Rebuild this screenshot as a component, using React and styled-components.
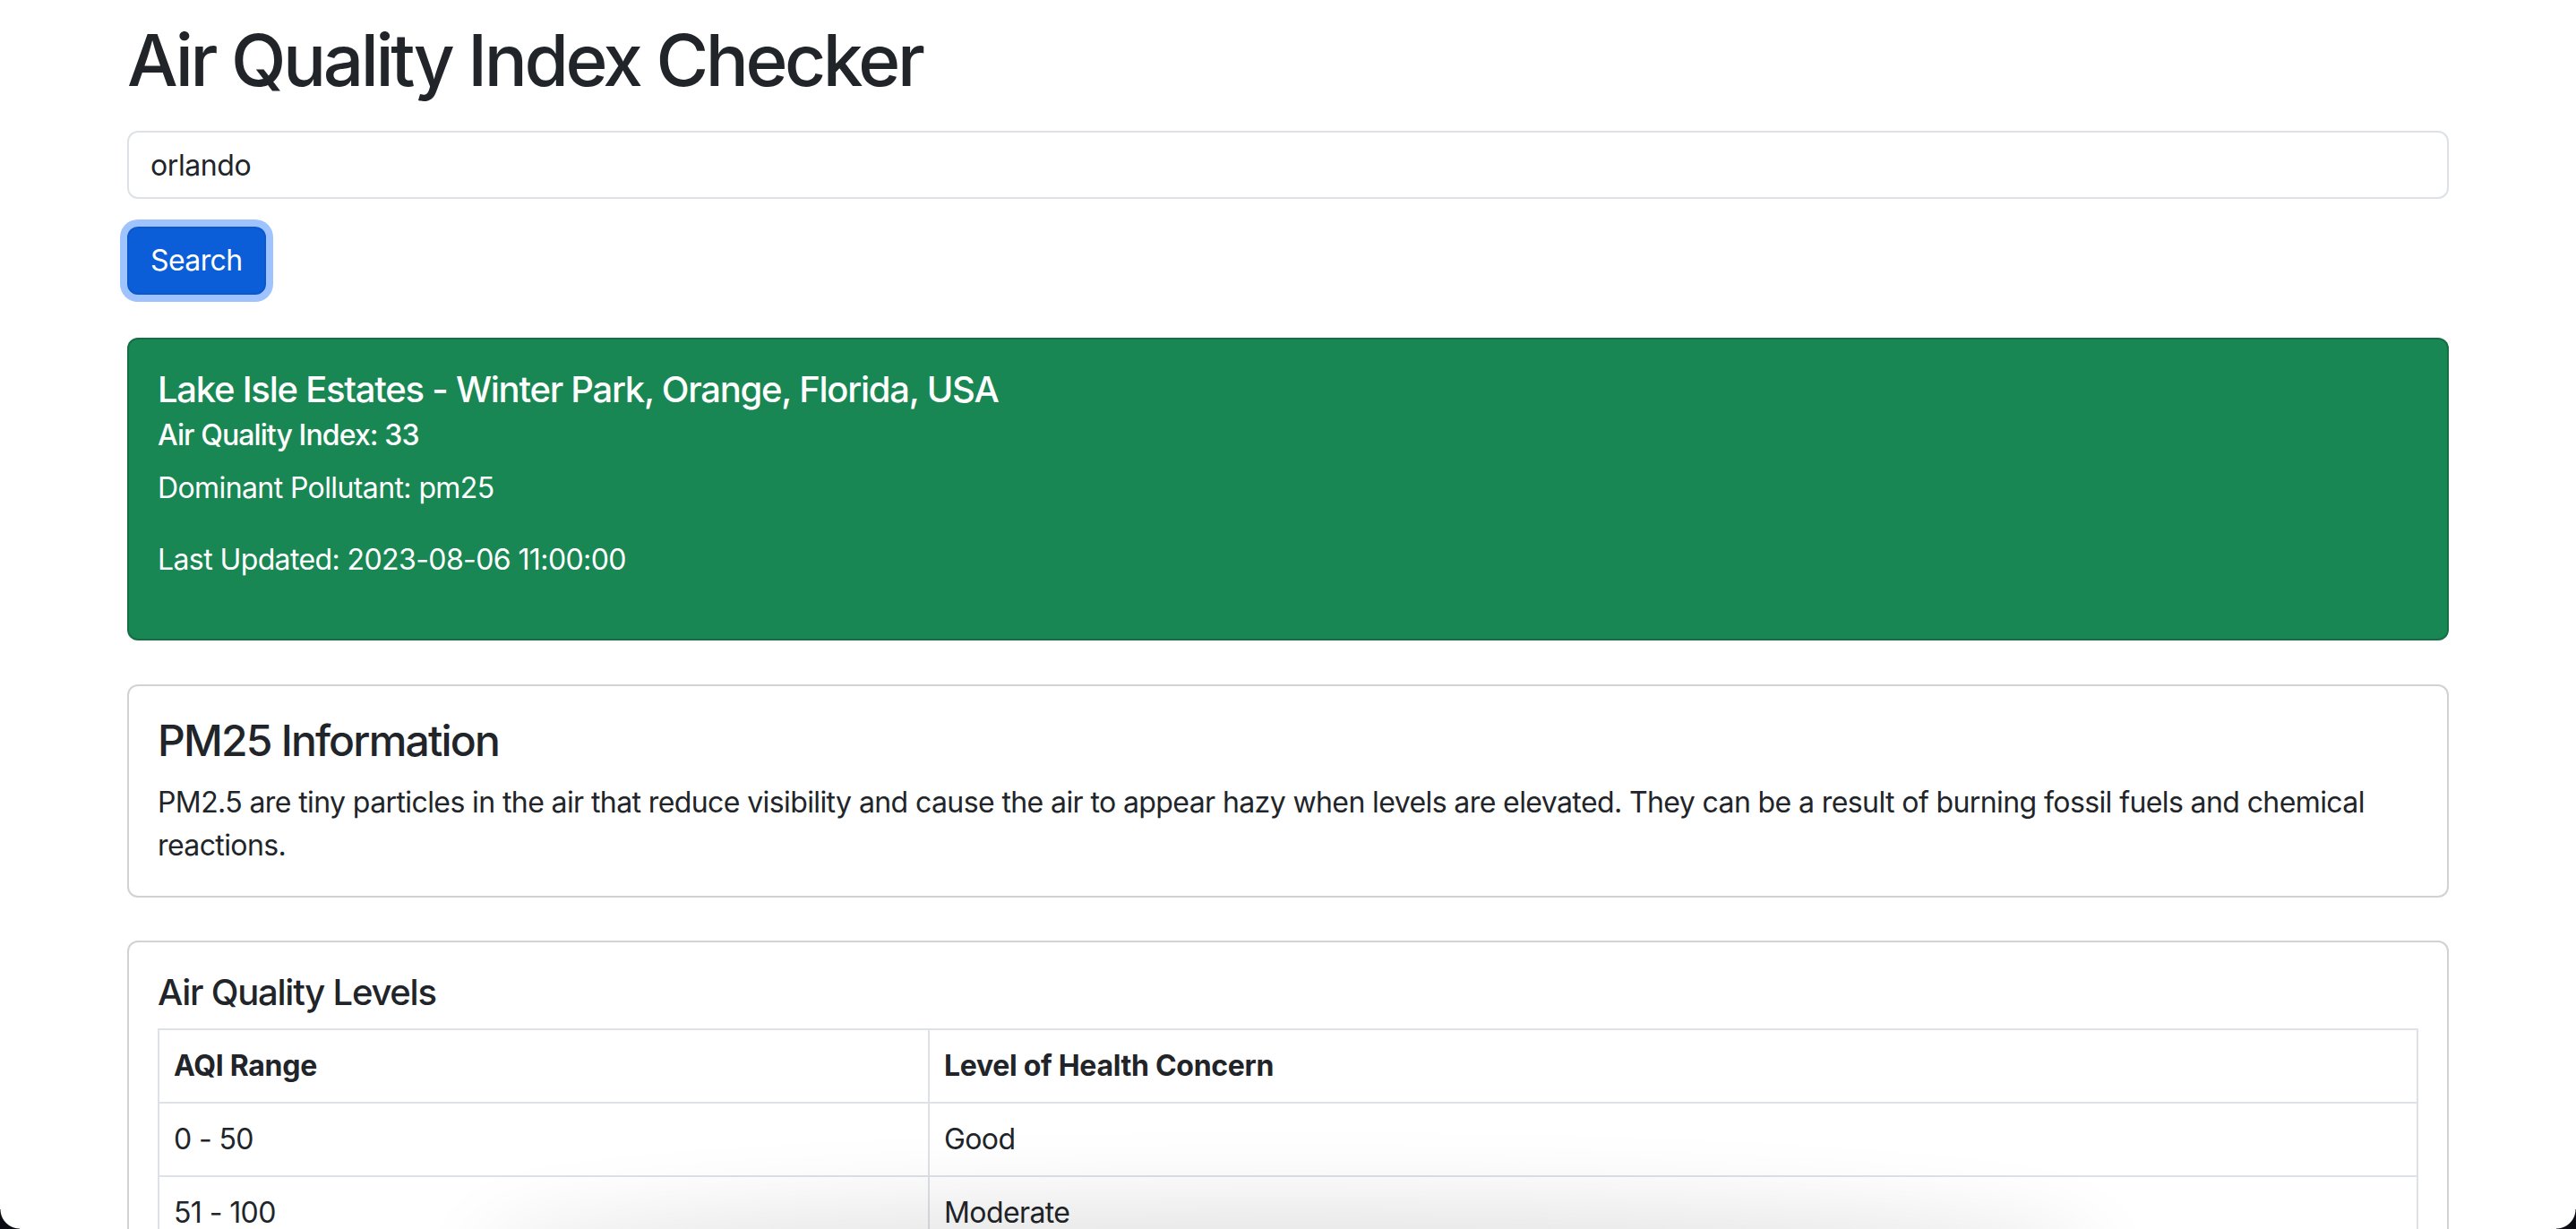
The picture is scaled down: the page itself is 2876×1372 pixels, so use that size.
import React from 'react';
import styled, { createGlobalStyle } from 'styled-components';

const GlobalStyle = createGlobalStyle`
  *, *::before, *::after {
    box-sizing: border-box;
  }
  body {
    margin: 0;
    background: #ffffff;
    color: #212529;
    font-family: Inter, "Noto Sans", "Liberation Sans", sans-serif;
    font-size: 32px;
    line-height: 1.5;
    letter-spacing: -0.6px;
  }
`;

const Container = styled.div`
  max-width: 2640px;
  margin: 0 auto;
  padding: 19px 24px 0;
`;

const Title = styled.h1`
  margin: 0 0 31px;
  font-size: 80px;
  font-weight: 500;
  line-height: 1.2;
  letter-spacing: -3.4px;
`;

const SearchInput = styled.input`
  display: block;
  width: 100%;
  height: 76px;
  margin: 0 0 31px;
  padding: 12px 24px;
  font-family: inherit;
  font-size: 32px;
  letter-spacing: -0.4px;
  color: #212529;
  background: #ffffff;
  border: 2px solid #dee2e6;
  border-radius: 12px;
  outline: none;
`;

const SearchButton = styled.button`
  display: inline-block;
  height: 76px;
  padding: 12px 24px;
  font-family: inherit;
  font-size: 32px;
  line-height: 1.5;
  letter-spacing: -0.6px;
  color: #ffffff;
  background: #0b5ed7;
  border: 2px solid #0a58ca;
  border-radius: 12px;
  box-shadow: 0 0 0 8px #9ec3fe;
  cursor: pointer;
`;

const Card = styled.div`
  margin-top: ${(p) => p.$gap}px;
  padding: 32px;
  border: 2px solid rgba(0, 0, 0, 0.175);
  border-radius: 12px;
  background: ${(p) => (p.$success ? '#198754' : '#ffffff')};
  color: ${(p) => (p.$success ? '#ffffff' : '#212529')};
`;

const CardTitle = styled.h5`
  margin: 0 0 16px;
  font-size: ${(p) => p.$size || 40}px;
  font-weight: 500;
  line-height: 1.2;
  letter-spacing: ${(p) => p.$track || -1.25}px;
`;

const CardSubtitle = styled.h6`
  margin: -8px 0 16px;
  font-size: 32px;
  font-weight: 500;
  line-height: 1.2;
  letter-spacing: -0.9px;
`;

const CardText = styled.p`
  margin: 0 0 32px;
  font-size: 32px;
  line-height: 1.5;
  &:last-child {
    margin-bottom: ${(p) => (p.$keep ? 32 : 0)}px;
  }
`;

const Table = styled.table`
  width: 100%;
  border-collapse: collapse;
  border: 2px solid #dee2e6;
`;

const HeadCell = styled.th`
  width: ${(p) => p.$width || 'auto'};
  padding: 16px;
  border: 2px solid #dee2e6;
  text-align: left;
  font-weight: 700;
  line-height: 1.5;
  letter-spacing: -0.3px;
`;

const Cell = styled.td`
  padding: 16px;
  border: 2px solid #dee2e6;
  line-height: 1.5;
`;

const BottomShade = styled.div`
  position: fixed;
  left: 560px;
  right: 560px;
  bottom: -70px;
  height: 70px;
  border-radius: 50%;
  box-shadow: 0 0 90px 30px rgba(0, 0, 0, 0.11);
  pointer-events: none;
`;

const Corner = styled.div`
  position: fixed;
  bottom: 0;
  ${(p) => (p.$right ? 'right: 0;' : 'left: 0;')}
  width: 22px;
  height: 22px;
  pointer-events: none;
  background: radial-gradient(
    circle at ${(p) => (p.$right ? '0 0' : '100% 0')},
    transparent 21px,
    #0c0c14 22px
  );
`;

const levels = [
  ['0 - 50', 'Good'],
  ['51 - 100', 'Moderate'],
  ['101 - 150', 'Unhealthy for Sensitive Groups'],
  ['151 - 200', 'Unhealthy'],
  ['201 - 300', 'Very Unhealthy'],
  ['301 +', 'Hazardous'],
];

export default function App() {
  return (
    <>
      <GlobalStyle />
      <Container>
        <Title>Air Quality Index Checker</Title>
        <SearchInput type="text" defaultValue="orlando" />
        <SearchButton type="button">Search</SearchButton>

        <Card $success $gap={48}>
          <CardTitle>Lake Isle Estates - Winter Park, Orange, Florida, USA</CardTitle>
          <CardSubtitle>Air Quality Index: 33</CardSubtitle>
          <CardText>Dominant Pollutant: pm25</CardText>
          <CardText $keep>Last Updated: 2023-08-06 11:00:00</CardText>
        </Card>

        <Card $gap={49}>
          <CardTitle $size={48} $track={-1.8}>PM25 Information</CardTitle>
          <CardText>
            PM2.5 are tiny particles in the air that reduce visibility and cause the air to appear
            hazy when levels are elevated. They can be a result of burning fossil fuels and chemical
            reactions.
          </CardText>
        </Card>

        <Card $gap={48}>
          <CardTitle>Air Quality Levels</CardTitle>
          <Table>
            <thead>
              <tr>
                <HeadCell $width="34.1%">AQI Range</HeadCell>
                <HeadCell>Level of Health Concern</HeadCell>
              </tr>
            </thead>
            <tbody>
              {levels.map(([range, level]) => (
                <tr key={range}>
                  <Cell>{range}</Cell>
                  <Cell>{level}</Cell>
                </tr>
              ))}
            </tbody>
          </Table>
        </Card>
      </Container>
      <BottomShade />
      <Corner />
      <Corner $right />
    </>
  );
}
